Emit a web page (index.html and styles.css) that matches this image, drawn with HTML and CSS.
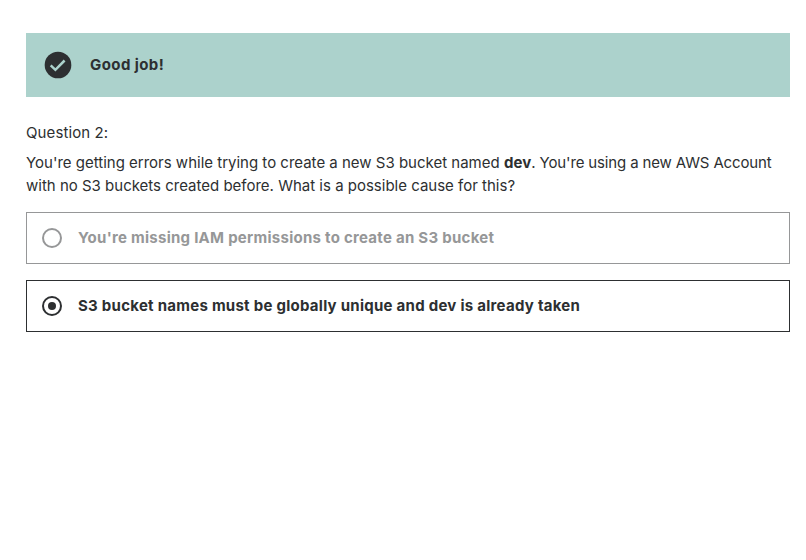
FILE: index.html
```html
<!DOCTYPE html>
<html lang="en">
<head>
<meta charset="utf-8">
<title>Quiz</title>
<link rel="stylesheet" href="styles.css">
</head>
<body>
<main class="quiz">
  <div class="banner">
    <svg class="banner-icon" viewBox="0 0 32 32" aria-hidden="true">
      <circle cx="16" cy="16" r="13.33" fill="#2d2f31"/>
      <path d="M8.7 16.3l4.7 4.5 9.2-9.3" fill="none" stroke="#acd2cc" stroke-width="2.5"/>
    </svg>
    <p class="banner-text">Good job!</p>
  </div>
  <p class="number">Question 2:</p>
  <p class="prompt">You're getting errors while trying to create a new S3 bucket named <strong class="dev">dev</strong><span class="tight">. You're using a new AWS Account</span><br>with no S3 buckets created before. What is a possible cause for this?</p>
  <ul class="answers">
    <li class="answer answer-disabled">
      <span class="radio"></span>
      <span class="label">You're missing IAM permissions to create an S3 bucket</span>
    </li>
    <li class="answer">
      <span class="radio radio-checked"></span>
      <span class="label">S3 bucket names must be globally unique and dev is already taken</span>
    </li>
  </ul>
</main>
</body>
</html>
```
FILE: styles.css
```css
* { box-sizing: border-box; }
body {
  margin: 0;
  background: #fff;
  color: #2d2f31;
  font: 400 15px/23px Inter, "Liberation Sans", sans-serif;
}
p, ul { margin: 0; padding: 0; }
.quiz { padding: 33px 16px 0 26px; }
.banner {
  display: flex;
  align-items: center;
  gap: 16px;
  height: 64px;
  padding: 0 16px;
  background: #acd2cc;
}
.banner-icon { width: 32px; height: 32px; }
.banner-text { padding-bottom: 2px; font-weight: 700; letter-spacing: 0.42px; }
.number { margin-top: 24px; letter-spacing: 0.1px; }
.prompt { margin-top: 7px; white-space: nowrap; }
.dev { font-weight: 700; letter-spacing: 0.1px; }
.tight { letter-spacing: -0.14px; }
.answers {
  display: flex;
  flex-direction: column;
  gap: 16px;
  margin-top: 15px;
  list-style: none;
}
.answer {
  display: flex;
  align-items: center;
  gap: 16px;
  height: 52px;
  padding: 0 15px;
  border: 1px solid #2d2f31;
  font-weight: 700;
}
.answer-disabled { border-color: #969798; color: #969798; }
.label { padding-bottom: 2px; letter-spacing: 0.265px; }
.radio {
  display: grid;
  place-items: center;
  width: 20px;
  height: 20px;
  border: 2px solid currentColor;
  border-radius: 50%;
}
.radio-checked::before {
  content: "";
  width: 8px;
  height: 8px;
  border-radius: 50%;
  background: currentColor;
}
```
